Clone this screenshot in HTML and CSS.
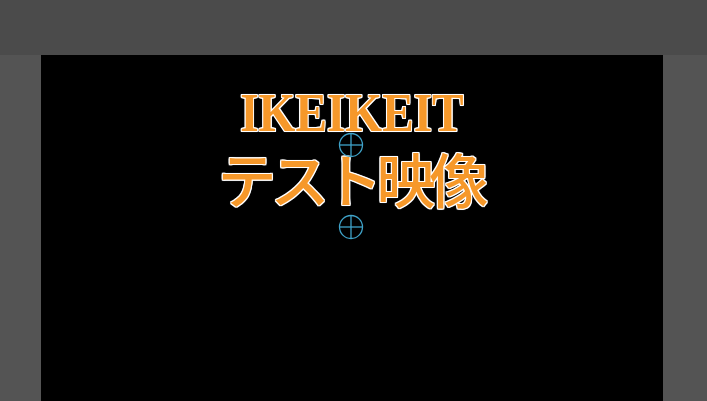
FILE: index.html
```html
<!DOCTYPE html>
<html lang="ja">
<head>
<meta charset="utf-8">
<link rel="stylesheet" href="styles.css">
</head>
<body>
<div class="topbar"></div>
<div class="workspace">
  <div class="side side-left"></div>
  <div class="canvas">
    <div class="title-block">
      <div class="line-en"><span class="en-inner">IKEIKEIT</span></div>
      <div class="line-ja">テスト映像</div>
      <svg class="anchor anchor-1" width="26" height="26" viewBox="0 0 26 26"><circle cx="13" cy="13" r="11.5" fill="none" stroke="#3fa3c9" stroke-width="1.3"/><line x1="1.5" y1="13" x2="24.5" y2="13" stroke="#3fa3c9" stroke-width="1.3"/><line x1="13" y1="1.5" x2="13" y2="24.5" stroke="#3fa3c9" stroke-width="1.3"/></svg>
      <svg class="anchor anchor-2" width="26" height="26" viewBox="0 0 26 26"><circle cx="13" cy="13" r="11.5" fill="none" stroke="#3fa3c9" stroke-width="1.3"/><line x1="1.5" y1="13" x2="24.5" y2="13" stroke="#3fa3c9" stroke-width="1.3"/><line x1="13" y1="1.5" x2="13" y2="24.5" stroke="#3fa3c9" stroke-width="1.3"/></svg>
    </div>
  </div>
  <div class="side side-right"></div>
</div>
</body>
</html>
```
FILE: styles.css
```css
html, body {
  margin: 0;
  padding: 0;
  width: 707px;
  height: 401px;
  overflow: hidden;
  background: #545454;
}
.topbar {
  height: 55px;
  background: #4b4b4b;
}
.workspace {
  display: flex;
  height: 346px;
}
.side {
  background: #545454;
}
.side-left {
  width: 41px;
}
.side-right {
  flex: 1;
}
.canvas {
  width: 622px;
  background: #000;
  display: flex;
  flex-direction: column;
  align-items: center;
}
.title-block {
  position: relative;
  width: 100%;
  padding-top: 35px;
  display: flex;
  flex-direction: column;
  align-items: center;
}
.line-en {
  font-family: "Liberation Serif", serif;
  font-weight: bold;
  font-size: 55px;
  line-height: 46px;
  height: 46px;
  color: #f6982a;
}
.en-inner {
  display: inline-block;
  transform: scaleX(0.86);
  text-shadow: 1px 0 0 #fff, -1px 0 0 #fff, 0 1px 0 #fff, 0 -1px 0 #fff,
    1px 1px 0 #fff, -1px -1px 0 #fff, 1px -1px 0 #fff, -1px 1px 0 #fff,
    0 0 2px #fff;
}
.line-ja {
  margin-top: 12px;
  font-family: "Noto Sans CJK JP", sans-serif;
  font-weight: 500;
  font-size: 59px;
  letter-spacing: -6px;
  text-indent: -4px;
  line-height: 60px;
  color: #f6982a;
  text-shadow: 1px 0 0 #fff, -1px 0 0 #fff, 0 1px 0 #fff, 0 -1px 0 #fff,
    1px 1px 0 #fff, -1px -1px 0 #fff, 1px -1px 0 #fff, -1px 1px 0 #fff,
    0 0 2px #fff;
}
.anchor {
  position: absolute;
  left: 297px;
}
.anchor-1 {
  top: 77px;
}
.anchor-2 {
  top: 159px;
}
```
